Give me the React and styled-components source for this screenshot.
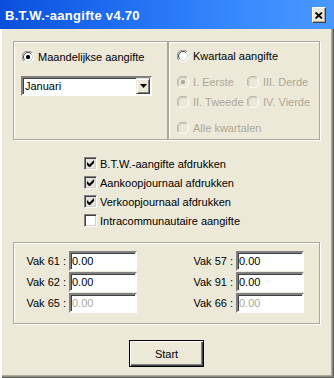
import React from 'react'
import styled, {createGlobalStyle} from 'styled-components'

const Global = createGlobalStyle`
  html, body { margin: 0; padding: 0; background: #ECE9D8; }
  body { font-family: "Liberation Sans", Arial, sans-serif; font-size: 11px; color: #000; }
  svg { flex: none; }
`;

const Window = styled.div`
  width: 334px;
  height: 378px;
  box-sizing: border-box;
  display: flex;
  flex-direction: column;
  background: #ECE9D8;
  box-shadow: inset 2px 0 0 #fff, inset -1px -1px 0 #5f5d54, inset -2px -2px 0 #8f8d80, inset -3px -3px 0 #ACA899;
`;

const TitleBar = styled.div`
  height: 29px;
  flex: none;
  display: flex;
  align-items: center;
  justify-content: space-between;
  padding: 0 8px 0 5px;
  background: linear-gradient(to right, #0a4fdc 0%, #1f6ef2 35%, #3a8cff 75%, #4a98ff 100%);
`;

const Title = styled.div`
  color: #fff;
  font-family: "Liberation Sans", Arial, sans-serif;
  font-weight: bold;
  font-size: 13px;
  letter-spacing: 0.3px;
  padding-top: 2px;
`;

const CloseBtn = styled.div`
  width: 14px;
  height: 16px;
  box-sizing: border-box;
  background: #ECE9D8;
  border: 1px solid;
  border-color: #fff #404040 #404040 #fff;
  box-shadow: inset -1px -1px 0 #ACA899;
  display: flex;
  align-items: center;
  justify-content: center;
  margin-top: 1px;
`;

const Body = styled.div`
  flex: 1;
  display: flex;
  flex-direction: column;
  padding: 12px 14px 0 13px;
`;

const TopRow = styled.div`
  display: flex;
`;

const Group = styled.div`
  box-sizing: border-box;
  border: 1px solid #ACA899;
  box-shadow: 1px 1px 0 #fff, inset 1px 1px 0 #fff;
  width: ${p => p.$w}px;
  height: ${p => p.$h}px;
  padding: ${p => p.$pad};
`;

const RadioRow = styled.label`
  display: flex;
  align-items: center;
  gap: 4px;
  height: 12px;
  white-space: nowrap;
  margin-top: ${p => p.$mt || 0}px;
  color: ${p => (p.$off ? '#ACA899' : '#000')};
`;

const OptionGrid = styled.div`
  display: grid;
  grid-template-columns: 70px 70px;
  row-gap: 8px;
  margin-top: 14px;
`;

const SelectBox = styled.div`
  width: 131px;
  height: 20px;
  box-sizing: border-box;
  margin-top: 13px;
  margin-left: -1px;
  background: #fff;
  border: 2px solid;
  border-color: #808080 #fff #fff #808080;
  box-shadow: inset 1px 1px 0 #404040;
  display: flex;
  align-items: center;
  justify-content: space-between;
  padding-left: 2px;
`;

const DropBtn = styled.div`
  width: 14px;
  height: 16px;
  box-sizing: border-box;
  background: #ECE9D8;
  border: 1px solid;
  border-color: #ECE9D8 #404040 #404040 #ECE9D8;
  box-shadow: inset 1px 1px 0 #fff, inset -1px -1px 0 #808080;
  display: flex;
  align-items: center;
  justify-content: center;
`;

const CheckList = styled.div`
  display: flex;
  flex-direction: column;
  gap: 6px;
  margin: 17px 0 15px 71px;
`;

const CheckRow = styled.label`
  display: flex;
  align-items: center;
  gap: 3px;
  height: 13px;
`;

const CheckBox = styled.span`
  width: 13px;
  height: 13px;
  box-sizing: border-box;
  border: 1px solid;
  border-color: #808080 #fff #fff #808080;
  box-shadow: inset 1px 1px 0 #404040, inset -1px -1px 0 #D4D0C8;
  background: ${p => (p.$on ? '#e4e2da' : '#fff')};
  display: flex;
  align-items: center;
  justify-content: center;
`;

const FieldGrid = styled.div`
  display: grid;
  grid-template-columns: 41px 68px 1fr 68px;
  grid-auto-rows: 20px;
  row-gap: 1px;
  align-items: center;
`;

const Label = styled.span`
  text-align: right;
  padding-right: 3px;
  white-space: nowrap;
  justify-self: end;
`;

const Field = styled.div`
  height: 20px;
  box-sizing: border-box;
  background: #fff;
  border: 2px solid;
  border-color: #808080 #fff #fff #808080;
  box-shadow: inset 1px 1px 0 #404040;
  display: flex;
  align-items: center;
  padding-left: 1px;
  color: ${p => (p.$off ? '#ACA899' : '#000')};
`;

const RightLabel = styled(Label)`
  grid-column: 3;
`;

const Footer = styled.div`
  display: flex;
  justify-content: center;
  margin-top: 16px;
`;

const Button = styled.button`
  width: 75px;
  height: 27px;
  box-sizing: border-box;
  font-family: "Liberation Sans", Arial, sans-serif;
  font-size: 11px;
  color: #000;
  background: #ECE9D8;
  border: 1px solid #000;
  box-shadow: inset 1px 1px 0 #fff, inset -1px -1px 0 #404040, inset -2px -2px 0 #808080;
  padding: 0;
`;

function Radio({on, off}) {
  return (
    <svg width="12" height="12" viewBox="0 0 12 12">
      <circle cx="6" cy="6" r="5.5" fill={off ? '#ECE9D8' : '#fff'} />
      <path d="M10.2 1.8 A5.5 5.5 0 0 0 1.8 10.2" fill="none" stroke={off ? '#ACA899' : '#808080'} />
      <path d="M1.8 10.2 A5.5 5.5 0 0 0 10.2 1.8" fill="none" stroke="#fff" />
      <path d="M9.2 2.8 A4.5 4.5 0 0 0 2.8 9.2" fill="none" stroke={off ? '#C8C4B4' : '#404040'} />
      <path d="M2.8 9.2 A4.5 4.5 0 0 0 9.2 2.8" fill="none" stroke={off ? '#ECE9D8' : '#D4D0C8'} />
      {on && <rect x="4" y="4" width="4" height="4" rx="1.5" fill={off ? '#ACA899' : '#000'} />}
    </svg>
  )
}

function Check({on, children}) {
  return (
    <CheckRow>
      <CheckBox $on={on}>
        {on && (
          <svg width="7" height="7" viewBox="0 0 7 7">
            <path d="M0 2v3l2 2h1l4-4V0L2.5 4.5z" fill="#000" />
          </svg>
        )}
      </CheckBox>
      {children}
    </CheckRow>
  )
}

export default function App() {
  return (
    <Window>
      <Global />
      <TitleBar>
        <Title>B.T.W.-aangifte v4.70</Title>
        <CloseBtn>
          <svg width="8" height="7" viewBox="0 0 8 7">
            <path d="M0.5 0.5L7 6.5M7 0.5L0.5 6.5" stroke="#000" strokeWidth="1.8" />
          </svg>
        </CloseBtn>
      </TitleBar>
      <Body>
        <TopRow>
          <Group $w={155} $h={99} $pad="9px 0 0 8px">
            <RadioRow><Radio on />Maandelijkse aangifte</RadioRow>
            <SelectBox>
              <span>Januari</span>
              <DropBtn>
                <svg width="7" height="4" viewBox="0 0 7 4"><path d="M0 0h7L3.5 4z" fill="#000" /></svg>
              </DropBtn>
            </SelectBox>
          </Group>
          <Group $w={152} $h={99} $pad="8px 0 0 8px">
            <RadioRow><Radio />Kwartaal aangifte</RadioRow>
            <OptionGrid>
              <RadioRow $off><Radio on off />I. Eerste</RadioRow>
              <RadioRow $off><Radio off />III. Derde</RadioRow>
              <RadioRow $off><Radio off />II. Tweede</RadioRow>
              <RadioRow $off><Radio off />IV. Vierde</RadioRow>
            </OptionGrid>
            <RadioRow $off $mt={14}><Radio off />Alle kwartalen</RadioRow>
          </Group>
        </TopRow>
        <CheckList>
          <Check on>B.T.W.-aangifte afdrukken</Check>
          <Check on>Aankoopjournaal afdrukken</Check>
          <Check on>Verkoopjournaal afdrukken</Check>
          <Check>Intracommunautaire aangifte</Check>
        </CheckList>
        <Group $w={307} $h={82} $pad="8px 15px 0 14px">
          <FieldGrid>
            <Label>Vak 61 :</Label>
            <Field>0.00</Field>
            <RightLabel>Vak 57 :</RightLabel>
            <Field>0.00</Field>
            <Label>Vak 62 :</Label>
            <Field>0.00</Field>
            <RightLabel>Vak 91 :</RightLabel>
            <Field>0.00</Field>
            <Label>Vak 65 :</Label>
            <Field $off>0.00</Field>
            <RightLabel>Vak 66 :</RightLabel>
            <Field $off>0.00</Field>
          </FieldGrid>
        </Group>
        <Footer>
          <Button>Start</Button>
        </Footer>
      </Body>
    </Window>
  )
}
